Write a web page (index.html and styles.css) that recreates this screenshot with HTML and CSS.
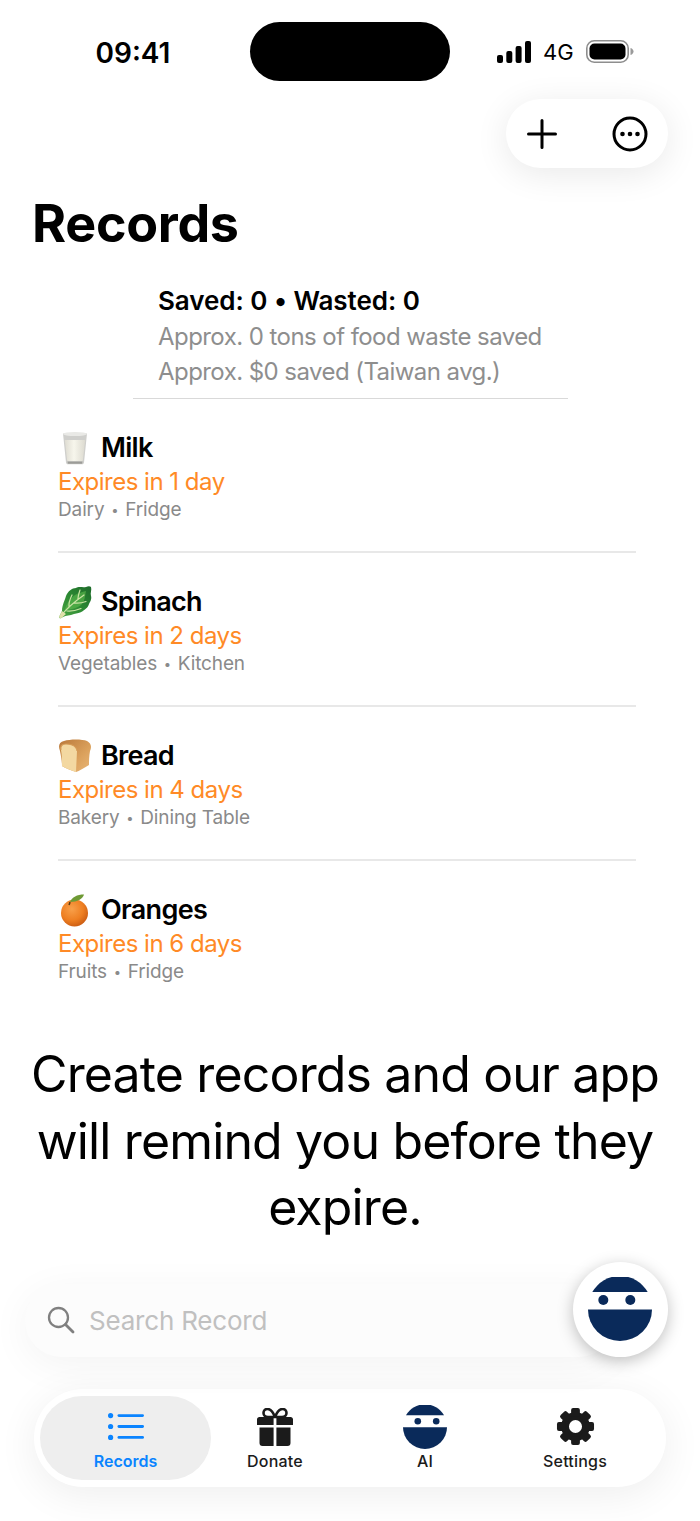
FILE: index.html
```html
<!DOCTYPE html>
<html lang="en">
<head>
<meta charset="utf-8">
<title>Records</title>
<link rel="stylesheet" href="styles.css">
</head>
<body>
<div class="screen">
  <header class="status">
    <div class="time">09:41</div>
    <div class="island"></div>
    <div class="status-right">
      <svg class="signal" viewBox="0 0 34 22" width="34" height="22"><rect x="0" y="14" width="6" height="8" rx="2"/><rect x="9.3" y="10" width="6" height="12" rx="2"/><rect x="18.6" y="5" width="6" height="17" rx="2"/><rect x="28" y="0" width="6" height="22" rx="2"/></svg>
      <span class="net">4G</span>
      <svg class="battery" viewBox="0 0 48 23" width="48" height="23"><rect x="0.8" y="0.8" width="41.4" height="21.4" rx="7.5" fill="none" stroke="#8e8e8e" stroke-width="1.6"/><rect x="3.5" y="3.5" width="36" height="16" rx="5" fill="#000"/><path d="M44.5 8v7c2-.6 3-2 3-3.500s-1-2.900-3-3.500z" fill="#9a9a9a"/></svg>
    </div>
  </header>

  <div class="toolbar">
    <div class="pill">
      <svg viewBox="0 0 30 30" width="30" height="30"><path d="M15 1.500v27M1.500 15h27" fill="none" stroke="#000" stroke-width="3" stroke-linecap="round"/></svg>
      <svg viewBox="0 0 36 36" width="36" height="36"><circle cx="18" cy="18" r="16" fill="none" stroke="#000" stroke-width="3"/><circle cx="10.500" cy="18" r="2.300"/><circle cx="18" cy="18" r="2.300"/><circle cx="25.500" cy="18" r="2.300"/></svg>
    </div>
  </div>

  <h1 class="title">Records</h1>

  <section class="summary">
    <div class="summary-head">Saved: 0 • Wasted: 0</div>
    <div class="summary-line">Approx. 0 tons of food waste saved</div>
    <div class="summary-line">Approx. $0 saved (Taiwan avg.)</div>
  </section>

  <ul class="records">
    <li class="record">
      <div class="name">
        <svg class="emoji" viewBox="0 0 34 34" width="34" height="34"><defs><linearGradient id="milk" x1="0" y1="0" x2="1" y2="0"><stop offset="0" stop-color="#dedcd2"/><stop offset=".45" stop-color="#f7f6ec"/><stop offset="1" stop-color="#dcdad0"/></linearGradient></defs><path d="M5 2.500h24l-3 29c-.1 1-1 1.800-2 1.800H10c-1 0-1.900-.8-2-1.800z" fill="#cfcfcc"/><path d="M6.800 9h20.400l-2.300 20c-.1.800-.8 1.300-1.600 1.300H10.700c-.8 0-1.500-.5-1.600-1.300z" fill="url(#milk)"/><path d="M9.500 30.500h15l-.4 2.300H9.900z" fill="#9c9c98"/><ellipse cx="17" cy="3" rx="12" ry="2" fill="#e9e9e6"/></svg>
        <span>Milk</span>
      </div>
      <div class="expires">Expires in 1 day</div>
      <div class="meta">Dairy <span class="dot">•</span> Fridge</div>
    </li>
    <li class="record">
      <div class="name">
        <svg class="emoji" viewBox="0 0 34 34" width="34" height="34"><defs><linearGradient id="leaf" x1="0" y1="1" x2="1" y2="0"><stop offset="0" stop-color="#4fa845"/><stop offset=".5" stop-color="#2c8a33"/><stop offset="1" stop-color="#1d6a2a"/></linearGradient></defs><path d="M1 32l3-6c0-6 3-11 4-15 2-5 6-8 10-8 3-2 7 0 10-1 2-1 4-1 5 0 1 3-1 6 0 9 1 3-1 6-2 8-1 4-4 5-6 7-3 2-6 2-9 3-4 2-8 1-11 3l-3 1.500z" fill="url(#leaf)"/><path d="M7 25c1-6 5-11 10-15 3-2 7-3 11-4-1 5-1 9-4 13-3 3-6 4-10 5-2 .5-5 1-7 1z" fill="#5fbb4e" opacity=".6"/><path d="M2 32c6-8 14-15 24-22M9 26c4 .5 9-.5 14-2.500M11 22c-.5-4 1-8 3-12M16 18c4 .5 8 0 12-1.500M20 14c0-3 1-6 2-9" fill="none" stroke="#c9e3a4" stroke-width="1.200" stroke-linecap="round"/><path d="M1 32l3-6 4 3c-2 2-4 3-5 4.500z" fill="#e1e0aa"/></svg>
        <span>Spinach</span>
      </div>
      <div class="expires">Expires in 2 days</div>
      <div class="meta">Vegetables <span class="dot">•</span> Kitchen</div>
    </li>
    <li class="record">
      <div class="name">
        <svg class="emoji" viewBox="0 0 34 34" width="34" height="34"><defs><linearGradient id="crust" x1="0" y1="0" x2="1" y2="1"><stop offset="0" stop-color="#b9783a"/><stop offset=".6" stop-color="#dba15c"/><stop offset="1" stop-color="#e8b677"/></linearGradient></defs><path d="M2 12C0 7 1 3 6 2c6-2 18-2 23 0 4 2 5 6 3 10-1 6-1 11-1 14-5 3-10 6-13 7-6-2-11-4-14-6 0-5-1-10-2-15z" fill="url(#crust)"/><path d="M3 11c-1-4 1-6 5-6s8 1 10 4c1 1 1 2 1 3l-1 21c-6-2-11-4-14-6 0-5 0-11-1-16z" fill="#f3d8a1"/><path d="M3 11c-1-4 1-6 5-6s8 1 10 4c1 1 1 2 1 3" fill="none" stroke="#d59a55" stroke-width="1.200"/></svg>
        <span>Bread</span>
      </div>
      <div class="expires">Expires in 4 days</div>
      <div class="meta">Bakery <span class="dot">•</span> Dining Table</div>
    </li>
    <li class="record">
      <div class="name">
        <svg class="emoji" viewBox="0 0 34 34" width="34" height="34"><defs><radialGradient id="orange" cx=".4" cy=".35" r=".7"><stop offset="0" stop-color="#f8a04a"/><stop offset=".6" stop-color="#ee7f22"/><stop offset="1" stop-color="#c95a12"/></radialGradient></defs><circle cx="16.500" cy="20" r="13.500" fill="url(#orange)"/><path d="M12 9c2-5 7-7.500 14-7.500-1 4.500-7 7.500-14 7.500z" fill="#6e9a35"/><path d="M11 12c.5-1 .8-2 1-3" fill="none" stroke="#5a3a12" stroke-width="1.500"/></svg>
        <span>Oranges</span>
      </div>
      <div class="expires">Expires in 6 days</div>
      <div class="meta">Fruits <span class="dot">•</span> Fridge</div>
    </li>
  </ul>

  <p class="hint">Create records and our app will remind you before they expire.</p>

  <div class="search-wrap">
    <div class="search">
      <svg viewBox="0 0 28 28" width="28" height="28"><circle cx="11.500" cy="11.500" r="9.500" fill="none" stroke="#808080" stroke-width="2.300"/><path d="M18.500 18.500l7.500 7.500" stroke="#808080" stroke-width="2.800" stroke-linecap="round"/></svg>
      <span>Search Record</span>
    </div>
    <button class="fab" type="button" aria-label="AI">
      <svg viewBox="0 0 64 64" width="64" height="64"><g fill="#0a2a5a"><path d="M4.300 15A32 32 0 0 1 59.700 15z"/><circle cx="15.300" cy="23" r="5"/><circle cx="42.300" cy="23" r="5"/><path d="M0 32.400H64A32 31.500 0 0 1 0 32.400z"/></g></svg>
    </button>
  </div>

  <nav class="tabs">
    <div class="tab active">
      <span class="tab-icon"><svg viewBox="0 0 36 27" width="36" height="27"><g fill="#0a84ff"><circle cx="2.600" cy="2.600" r="2.600"/><circle cx="2.600" cy="13.500" r="2.600"/><circle cx="2.600" cy="24.400" r="2.600"/><rect x="9.500" y="1.200" width="26.500" height="2.800" rx="1.400"/><rect x="9.500" y="12.100" width="26.500" height="2.800" rx="1.400"/><rect x="9.500" y="23" width="26.500" height="2.800" rx="1.400"/></g></svg></span>
      <span>Records</span>
    </div>
    <div class="tab">
      <span class="tab-icon"><svg viewBox="0 0 36 38" width="36" height="38"><g fill="#1b1b1b"><path d="M2.500 9H16.600V17H0V11.500C0 10 1 9 2.500 9zM19.400 9H33.500C35 9 36 10 36 11.500V17H19.400z"/><path d="M2.500 19.400H16.600V38H5.500C3.500 38 2.500 37 2.500 35zM19.400 19.400H33.500V35c0 2-1 3-3 3H19.400z"/></g><path d="M18 9c-2-5-4-8-7.500-8C8 1 6.500 2.800 6.500 5c0 2.500 2 4 4.500 4zM18 9c2-5 4-8 7.500-8C28 1 29.500 2.800 29.500 5c0 2.500-2 4-4.500 4z" fill="none" stroke="#1b1b1b" stroke-width="2.600"/></svg></span>
      <span>Donate</span>
    </div>
    <div class="tab">
      <span class="tab-icon"><svg viewBox="0 0 64 64" width="44" height="44"><g fill="#0a2a5a"><path d="M4.300 15A32 32 0 0 1 59.700 15z"/><circle cx="21.500" cy="23.700" r="4.800"/><circle cx="48.300" cy="23.700" r="4.800"/><path d="M0 32.400H64A32 31.500 0 0 1 0 32.400z"/></g></svg></span>
      <span>AI</span>
    </div>
    <div class="tab">
      <span class="tab-icon"><svg viewBox="0 0 40 40" width="39" height="39"><g fill="#1b1b1b"><circle cx="20" cy="20" r="10.700" fill="none" stroke="#1b1b1b" stroke-width="8"/><rect x="15.500" y="1" width="9" height="9" rx="2"/><rect x="15.500" y="1" width="9" height="9" rx="2" transform="rotate(45 20 20)"/><rect x="15.500" y="1" width="9" height="9" rx="2" transform="rotate(90 20 20)"/><rect x="15.500" y="1" width="9" height="9" rx="2" transform="rotate(135 20 20)"/><rect x="15.500" y="1" width="9" height="9" rx="2" transform="rotate(180 20 20)"/><rect x="15.500" y="1" width="9" height="9" rx="2" transform="rotate(225 20 20)"/><rect x="15.500" y="1" width="9" height="9" rx="2" transform="rotate(270 20 20)"/><rect x="15.500" y="1" width="9" height="9" rx="2" transform="rotate(315 20 20)"/></g></svg></span>
      <span>Settings</span>
    </div>
  </nav>
</div>
</body>
</html>
```
FILE: styles.css
```css
* { box-sizing: border-box; }
html, body { margin: 0; padding: 0; background: #fff; }
body { font-family: Inter, "Liberation Sans", sans-serif; color: #000; }
.screen { width: 700px; height: 1521px; overflow: hidden; display: flex; flex-direction: column; background: #fff; }

.status { display: grid; grid-template-columns: 250px 200px 250px; padding-top: 22px; height: 99px; align-items: start; }
.time { font-size: 28px; font-weight: 600; line-height: 59px; text-align: center; padding: 2px 0 0 16px; }
.island { height: 59px; background: #000; border-radius: 30px; }
.status-right { display: flex; align-items: center; height: 59px; padding-left: 47px; gap: 12px; }
.signal { fill: #000; }
.net { font-size: 22px; font-weight: 400; }

.toolbar { display: flex; justify-content: flex-end; padding-right: 32px; }
.pill { width: 162px; height: 69px; border-radius: 35px; background: #fff; box-shadow: 0 6px 34px rgba(0, 0, 0, .09); display: flex; align-items: center; justify-content: space-between; padding: 0 20px 0 21px; }

.title { margin: 25px 0 0 32px; font-size: 52px; line-height: 62px; font-weight: 700; letter-spacing: -.3px; }

.summary { width: 435px; margin: 27px 0 0 133px; padding: 0 0 8.500px 25px; border-bottom: 1px solid #d9d9d9; }
.summary-head { font-size: 26px; line-height: 37px; font-weight: 600; letter-spacing: -.05px; }
.summary-line { font-size: 24px; line-height: 35px; color: #8e8e8e; letter-spacing: -.56px; }

.records { list-style: none; margin: 0 0 0 58px; padding: 0; width: 578px; }
.record { height: 154.300px; padding-top: 32px; border-bottom: 2px solid #e8e8e8; }
.record:last-child { border-bottom: 0; height: 122px; }
.name { display: flex; align-items: center; gap: 9px; font-size: 27px; line-height: 34px; font-weight: 600; letter-spacing: -.7px; }
.emoji { flex: none; }
.expires { font-size: 24px; line-height: 34px; color: #ff8a26; letter-spacing: -.5px; }
.meta { font-size: 19px; line-height: 22px; color: #8a8a8a; letter-spacing: -.12px; }
.dot { font-size: 13px; margin: 0 1.500px; vertical-align: 1px; }

.hint { margin: 58px 10px 0 0; padding: 0 20px; font-size: 50px; line-height: 66.500px; text-align: center; letter-spacing: -.85px; }

.search-wrap { position: relative; margin: 43px 0 0 25px; width: 643px; height: 73px; }
.search { height: 73px; width: 590px; border-radius: 37px; background: #fcfcfc; display: flex; align-items: center; gap: 14px; padding-left: 22px; box-shadow: 0 8px 40px rgba(0, 0, 0, .05); font-size: 26px; letter-spacing: -.2px; color: #c0c0c0; }
.fab { position: absolute; right: 0; bottom: 0; width: 95px; height: 95px; border: 0; border-radius: 50%; padding: 0 1px 0 0; background: #fff; box-shadow: 0 4px 16px rgba(0, 0, 0, .25); display: flex; align-items: center; justify-content: center; }

.tabs { margin: 32px 0 0 34px; width: 632px; height: 98px; border-radius: 49px; background: #fff; box-shadow: 0 8px 40px rgba(0, 0, 0, .07); padding: 7px 16px; display: grid; grid-template-columns: repeat(4, 150px); }
.tab { display: flex; flex-direction: column; align-items: center; gap: 2px; padding-top: 9px; font-size: 16px; line-height: 20px; font-weight: 500; letter-spacing: .2px; color: #1b1b1b; border-radius: 42px; }
.tab-icon { height: 44px; display: flex; align-items: center; justify-content: center; }
.tab.active { margin: 0 -11px 0 -10px; background: #eeeeee; color: #0a84ff; font-weight: 600; letter-spacing: 0; }
```
